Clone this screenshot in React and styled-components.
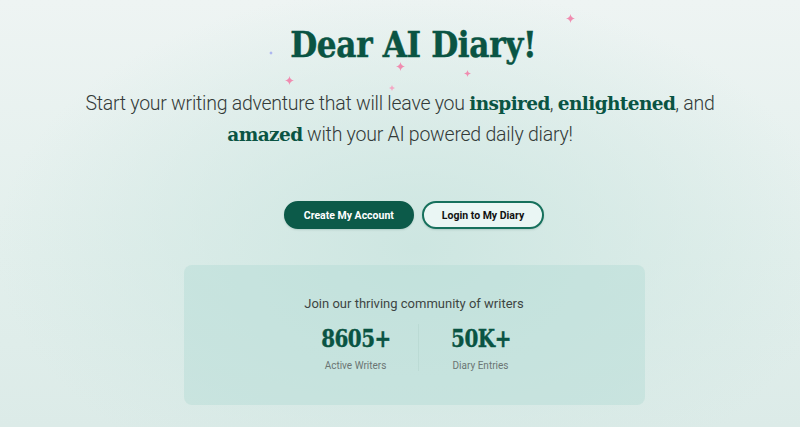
import React from "react";
import styled, { createGlobalStyle } from "styled-components";

const GlobalStyle = createGlobalStyle`
  html, body {
    margin: 0;
    padding: 0;
  }
  body {
    font-family: Roboto, "Liberation Sans", sans-serif;
    background: #e6f1ef;
  }
`;

const green = "#0a5443";
const slab = `"DejaVu Serif", serif`;

const Page = styled.div`
  position: relative;
  width: 800px;
  height: 427px;
  overflow: hidden;
  background:
    radial-gradient(ellipse 420px 260px at 52% 58%, #cde6e1 0%, rgba(205, 230, 225, 0) 100%),
    linear-gradient(180deg, #eef4f3 0%, #e2efec 60%, #dcebe8 100%);
  display: flex;
  flex-direction: column;
  align-items: center;
`;

const Title = styled.h1`
  margin: 23px 0 0 26px;
  font-family: ${slab};
  font-weight: bold;
  font-size: 35px;
  line-height: 44px;
  letter-spacing: -0.4px;
  color: ${green};
  -webkit-text-stroke: 0.5px ${green};
  transform: scaleX(0.89);
`;

const Lead = styled.p`
  margin: 21px 0 0;
  width: 660px;
  text-align: center;
  font-family: Roboto, "Liberation Sans", sans-serif;
  font-weight: 300;
  font-size: 19.5px;
  line-height: 31px;
  letter-spacing: -0.25px;
  color: #333a38;
`;

const Strong = styled.b`
  font-family: ${slab};
  font-weight: bold;
  font-size: 18.5px;
  letter-spacing: -0.6px;
  color: ${green};
`;

const Buttons = styled.div`
  display: flex;
  gap: 8px;
  margin: 51px 0 0 28px;
`;

const Button = styled.button`
  height: 28px;
  padding: 0 18px;
  border-radius: 14px;
  font-family: Roboto, "Liberation Sans", sans-serif;
  font-weight: 700;
  font-size: 10.5px;
  cursor: pointer;
  border: 2px solid ${(p) => (p.$primary ? "#0c5a49" : "#16705c")};
  background: ${(p) => (p.$primary ? "#0c5a49" : "#eaf6f4")};
  color: ${(p) => (p.$primary ? "#ffffff" : "#111")};
  box-shadow: 0 1px 2px rgba(0, 60, 45, 0.15);
`;

const Card = styled.div`
  margin: 36px 0 0 28px;
  width: 461px;
  height: 140px;
  box-sizing: border-box;
  border-radius: 8px;
  background: rgba(180, 220, 212, 0.45);
  display: flex;
  flex-direction: column;
  align-items: center;
  padding-top: 31px;
`;

const CardTitle = styled.div`
  font-size: 13px;
  color: #3e4543;
  line-height: 16px;
`;

const Stats = styled.div`
  display: flex;
  margin: 12px 0 0 8px;
`;

const Stat = styled.div`
  width: 124px;
  display: flex;
  flex-direction: column;
  align-items: center;
  & + & {
    border-left: 1px solid rgba(10, 84, 67, 0.05);
  }
`;

const Number = styled.div`
  font-family: ${slab};
  font-weight: bold;
  font-size: 24px;
  line-height: 30px;
  letter-spacing: -0.6px;
  color: ${green};
  transform: scaleX(0.83);
  -webkit-text-stroke: 0.4px ${green};
`;

const Label = styled.div`
  margin-top: 6px;
  font-size: 10px;
  color: #6b7573;
`;

const Sparkle = styled.svg`
  position: absolute;
  left: ${(p) => p.$x}px;
  top: ${(p) => p.$y}px;
`;

const sparkles = [
  { x: 566, y: 14, s: 9, c: "#f08cb0" },
  { x: 285, y: 76, s: 9, c: "#f08cb0" },
  { x: 396, y: 62, s: 9, c: "#f08cb0" },
  { x: 464, y: 70, s: 7, c: "#f08cb0" },
  { x: 389, y: 85, s: 6, c: "#f4a8c4" },
  { x: 269, y: 51, s: 4, c: "#9aa3f0" },
];

const Star = ({ x, y, s, c }) => (
  <Sparkle $x={x} $y={y} width={s} height={s} viewBox="0 0 10 10">
    <path d="M5 0 Q5.6 4.4 10 5 Q5.6 5.6 5 10 Q4.4 5.6 0 5 Q4.4 4.4 5 0Z" fill={c} />
  </Sparkle>
);

export default function App() {
  return (
    <>
      <GlobalStyle />
      <Page>
        {sparkles.map((s, i) => (
          <Star key={i} {...s} />
        ))}
        <Title>Dear AI Diary!</Title>
        <Lead>
          Start your writing adventure that will leave you <Strong>inspired</Strong>,{" "}
          <Strong>enlightened</Strong>, and <Strong>amazed</Strong> with your AI powered daily
          diary!
        </Lead>
        <Buttons>
          <Button $primary>Create My Account</Button>
          <Button>Login to My Diary</Button>
        </Buttons>
        <Card>
          <CardTitle>Join our thriving community of writers</CardTitle>
          <Stats>
            <Stat>
              <Number>8605+</Number>
              <Label>Active Writers</Label>
            </Stat>
            <Stat>
              <Number>50K+</Number>
              <Label>Diary Entries</Label>
            </Stat>
          </Stats>
        </Card>
      </Page>
    </>
  );
}
